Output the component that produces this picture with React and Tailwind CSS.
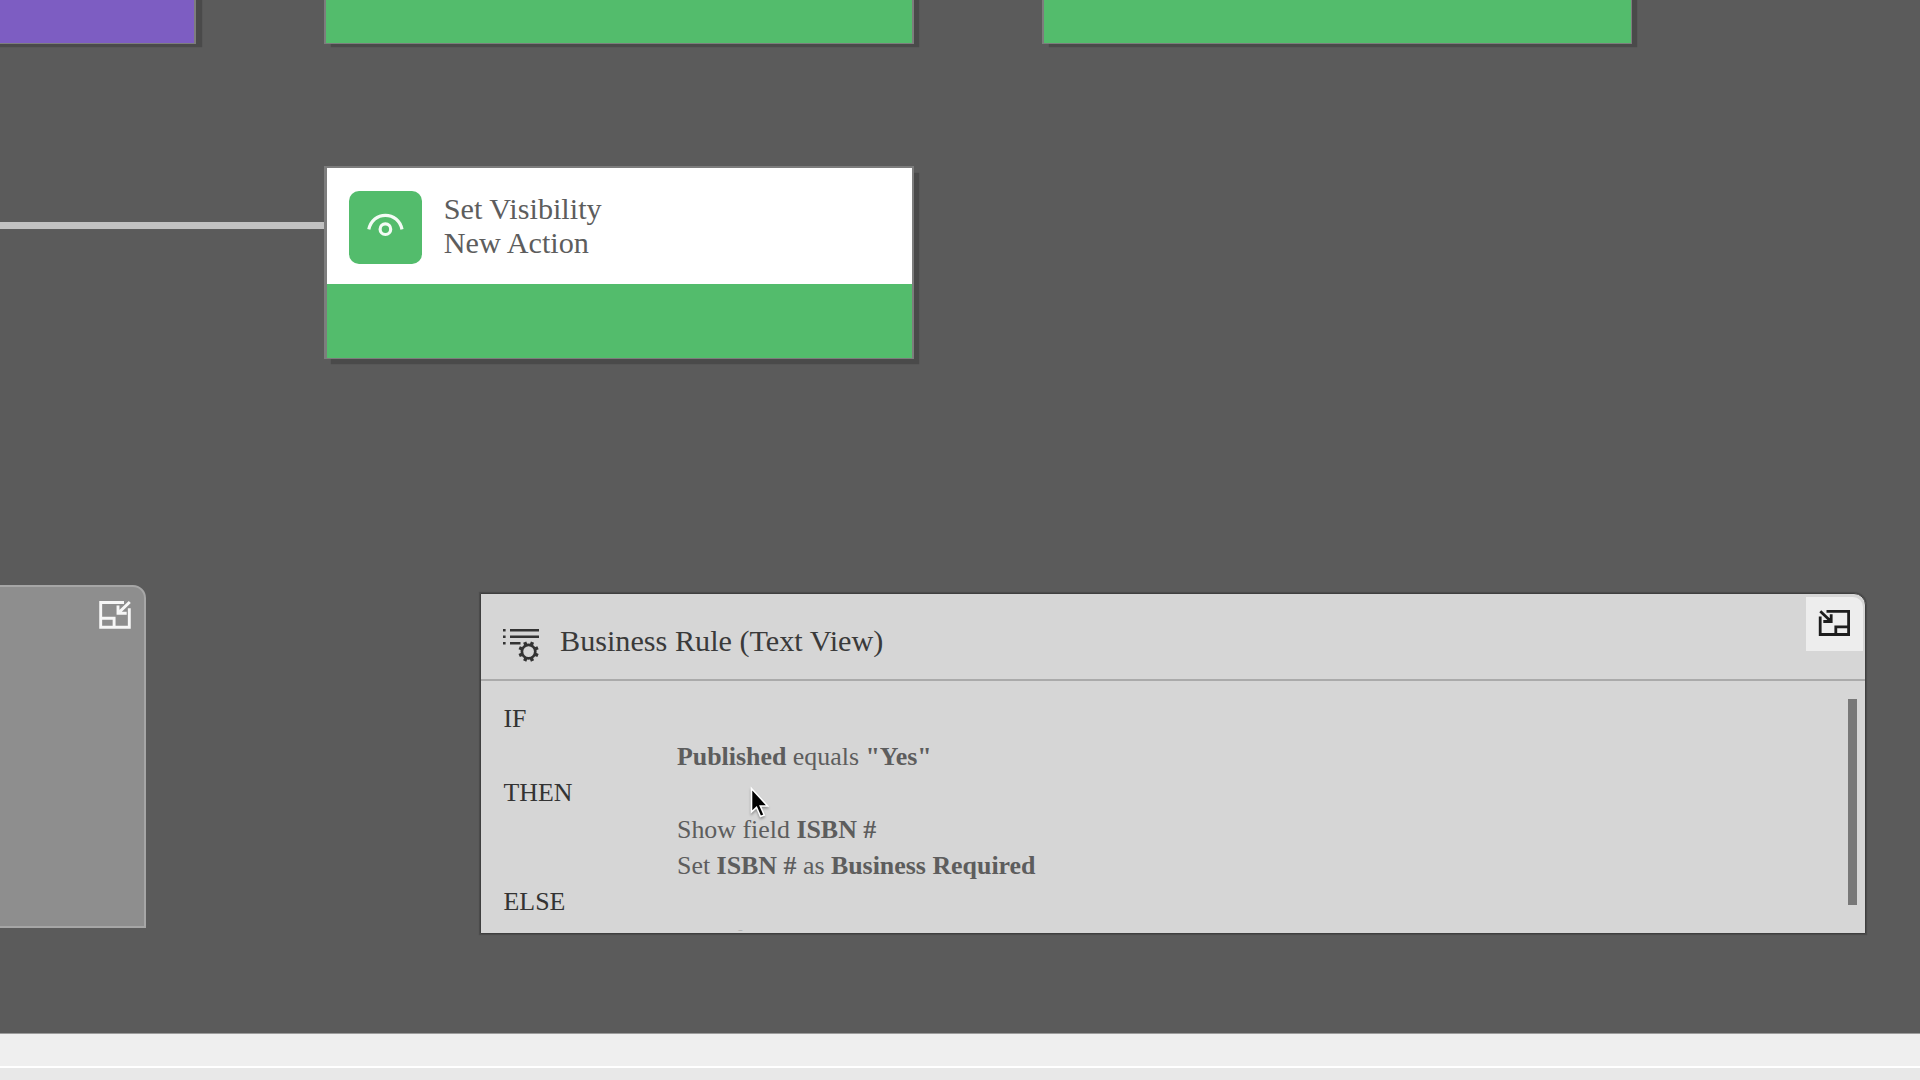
const Node = ({ className, children }) => (
  <div className={`absolute border-[#7d7d7d] ${className}`}>{children}</div>
);

const EyeIcon = () => (
  <svg viewBox="0 0 73 73" className="size-[73px]" fill="none" stroke="#f3fbf5" strokeWidth="3.2">
    <path d="M19.8 38.4C21.7 29.5 28.5 24.3 36.4 24.3S51.2 29.5 53 38.4" />
    <circle cx="36.4" cy="38.2" r="5.3" />
  </svg>
);

const CollapseIcon = () => (
  <svg viewBox="0 0 34 30" className="h-[30px] w-[34px]" fill="none" stroke="#f7f7f7" strokeWidth="2.9">
    <path d="M26 2.5H2.7V27.3H31.3V8.3" />
    <path d="M2.7 18.3H16.1V27.3" />
    <path d="M31.8 2L21 12.4M20 5.5V13.3H28.7" />
  </svg>
);

const RestoreIcon = () => (
  <svg viewBox="0 0 34 30" className="h-[30px] w-[34px]" fill="none" stroke="#1d1d1d" strokeWidth="2.8">
    <path d="M9.5 4.3H31.6V27.5H3.2V9.5" />
    <path d="M31.6 19.8H18.8V27.5" />
    <path d="M3.3 4.3L13 13.6M6.3 14.5H14.2V7.3" />
    <path d="M9 14.5L14.2 9.5V14.5Z" fill="#1d1d1d" stroke="none" />
  </svg>
);

const RuleIcon = () => (
  <svg viewBox="0 0 38 36" className="h-9 w-[38px]" fill="none" stroke="#333333" strokeWidth="2.5">
    <path d="M8 3.2H37M8 9.7H37M8 16.2H18.5" />
    <path d="M1 3.2H3.6M1 9.7H3.6M1 16.2H3.6" />
    <circle cx="26.6" cy="24.6" r="6.7" strokeWidth="2.7" />
    <g strokeWidth="3.4">
      <path d="M33.4 27.4l2.6 1.1M29.4 31.4l1.1 2.6M23.8 31.4l-1.1 2.6M19.8 27.4l-2.6 1.1M19.8 21.8l-2.6-1.1M23.8 17.8l-1.1-2.6M29.4 17.8l1.1-2.6M33.4 21.8l2.6-1.1" />
    </g>
  </svg>
);

const Cursor = () => (
  <svg viewBox="0 0 20 34" className="absolute left-[749px] top-[786px] h-[34px] w-5 drop-shadow-[0_2px_1px_rgba(0,0,0,0.3)]">
    <path
      d="M2.5 2.5V26L7.5 21.3L11.5 30.5L15.2 29L11.3 20H18.6Z"
      fill="#000"
      stroke="#fff"
      strokeWidth="1.6"
    />
  </svg>
);

const Keyword = ({ children }) => <div className="h-[38px] text-[#333333]">{children}</div>;

export default function App() {
  return (
    <div className="flex h-[1080px] w-[1920px] flex-col overflow-hidden bg-[#e8e8e8] font-['Liberation_Serif',serif]">
      <main className="relative h-[1034px] shrink-0 overflow-hidden border-b border-[#9c9c9c] bg-[#5b5b5b]">
        <Node className="-left-2.5 -top-5 h-16 w-[206px] border-b border-r-2 bg-[#7d5dc2] shadow-[7px_4px_1px_-1px_#4a4a4a]" />
        <Node className="-top-5 left-[324px] h-16 w-[590px] border-b border-l-2 border-r-2 bg-[#53bc6c] shadow-[6px_4px_1px_-1px_#4a4a4a]" />
        <Node className="-top-5 left-[1042px] h-16 w-[590px] border-b border-l-2 border-r bg-[#53bc6c] shadow-[6px_4px_1px_-1px_#4a4a4a]" />

        <div className="absolute left-0 top-[222px] h-[7px] w-[324px] bg-[#c1c1c1]" />
        <Node className="left-[324px] top-[166px] flex h-[193px] w-[590px] flex-col border-b border-l-3 border-r-2 border-t-2 bg-[#53bc6c] shadow-[6px_6px_1px_-1px_#4a4a4a]">
          <div className="flex h-[116px] shrink-0 items-start bg-white pl-[22px] pt-[23px]">
            <div className="size-[73px] rounded-[10px] bg-[#53bc6c]">
              <EyeIcon />
            </div>
            <div className="ml-[21.8px] mt-px text-[30.2px] leading-[34px] text-[#5d5d5d]">
              <div>Set Visibility</div>
              <div>New Action</div>
            </div>
          </div>
        </Node>

        <section className="absolute -left-2.5 top-[585px] flex h-[343px] w-[156px] items-start justify-end rounded-tr-[13px] border-2 border-[#a6a6a6] bg-[#8e8e8e] pr-[12px] pt-[13px]">
          <CollapseIcon />
        </section>

        <section className="absolute left-[480px] top-[593px] flex h-[341px] w-[1386px] flex-col overflow-hidden rounded-tr-[12px] border border-[#3f3f3f] bg-[#d6d6d6] shadow-[0_0_1px_1px_#4a4a4a]">
          <header className="flex h-[87px] shrink-0 items-start border-b-2 border-[#aaaaaa]">
            <div className="ml-[21px] mt-[33px]">
              <RuleIcon />
            </div>
            <h1 className="ml-[20px] mt-[30px] text-[30.2px] leading-[34px] text-[#3a3a3a]">Business Rule (Text View)</h1>
            <div className="ml-auto mr-0.5 mt-[3px] flex h-[54px] w-[57px] items-start rounded-tr-[10px] bg-[#ededed] pl-[11px] pt-[10px]">
              <RestoreIcon />
            </div>
          </header>
          <div className="mb-[2px] flex min-h-0 flex-1 overflow-hidden">
            <div className="flex-1 pl-[22.5px] pt-[19px] text-[25.9px] leading-[38px] text-[#5d5d5d]">
              <Keyword>IF</Keyword>
              <div className="h-9 pl-[173.5px]">
                <b>Published</b> equals <b>"Yes"</b>
              </div>
              <Keyword>THEN</Keyword>
              <div className="h-[36px] pl-[173.5px] leading-[35px]">
                Show field <b>ISBN #</b>
              </div>
              <div className="h-[35px] pl-[173.5px] leading-[36px]">
                Set <b>ISBN #</b> as <b>Business Required</b>
              </div>
              <Keyword>ELSE</Keyword>
              <div className="h-[36px] pl-[173.5px] text-[#b4b4b4]">
                Hide field <b>ISBN #</b>
              </div>
            </div>
            <div className="mr-[8px] mt-[18px] h-[206px] w-[9px] bg-[#787878]" />
          </div>
        </section>
        <Cursor />
      </main>
      <footer className="h-8 shrink-0 bg-[#efefef]" />
      <div className="h-0.5 shrink-0 bg-white" />
    </div>
  );
}
